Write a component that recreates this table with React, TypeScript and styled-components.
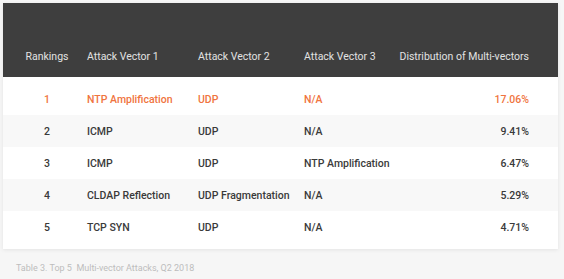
import React from 'react';
import styled, { createGlobalStyle } from 'styled-components';

const GlobalStyle = createGlobalStyle`
  body {
    margin: 0;
    background: #f6f6f6;
    font-family: Roboto, "Liberation Sans", sans-serif;
  }
`;

const Page = styled.div`
  width: 564px;
  height: 279px;
  padding: 3px 6px 0 3px;
  box-sizing: border-box;
`;

const Card = styled.div`
  background: #ffffff;
  box-shadow: 0 1px 4px rgba(0, 0, 0, 0.08);
`;

const COLS = '84px 111px 106px 95px 1fr';

const HeadRow = styled.div`
  display: grid;
  grid-template-columns: ${COLS};
  align-items: end;
  height: 74px;
  padding: 0 29px 13px 0;
  box-sizing: border-box;
  background: #3e3e3e;
  color: #e2e2e2;
  font-size: 10.5px;
  line-height: 14px;
`;

const Body = styled.div`
  padding: 6px 0;
`;

const Row = styled.div<{ shaded: boolean; highlight: boolean }>`
  display: grid;
  grid-template-columns: ${COLS};
  align-items: center;
  height: 32px;
  padding-right: 29px;
  background: ${({ shaded }) => (shaded ? '#f8f8f8' : '#ffffff')};
  color: ${({ highlight }) => (highlight ? '#f07440' : '#3a3a3a')};
  font-size: 10.5px;
  font-weight: 500;
`;

const Cell = styled.div<{ align?: 'left' | 'center' | 'right' }>`
  text-align: ${({ align }) => align || 'left'};
  padding-left: ${({ align }) => (align === 'center' ? '4px' : '0')};
  white-space: nowrap;
`;

const Caption = styled.div`
  margin: 14px 0 0 13px;
  font-size: 9px;
  color: #bdbdbd;
  white-space: pre;
`;

const rows = [
  ['1', 'NTP Amplification', 'UDP', 'N/A', '17.06%'],
  ['2', 'ICMP', 'UDP', 'N/A', '9.41%'],
  ['3', 'ICMP', 'UDP', 'NTP Amplification', '6.47%'],
  ['4', 'CLDAP Reflection', 'UDP Fragmentation', 'N/A', '5.29%'],
  ['5', 'TCP SYN', 'UDP', 'N/A', '4.71%'],
];

const App = () => {
  return (
    <Page>
      <GlobalStyle />
      <Card>
        <HeadRow>
          <Cell align="center">Rankings</Cell>
          <Cell>Attack Vector 1</Cell>
          <Cell>Attack Vector 2</Cell>
          <Cell>Attack Vector 3</Cell>
          <Cell align="right">Distribution of Multi-vectors</Cell>
        </HeadRow>
        <Body>
          {rows.map((r, i) => (
            <Row key={r[0]} shaded={i % 2 === 1} highlight={i === 0}>
              <Cell align="center">{r[0]}</Cell>
              <Cell>{r[1]}</Cell>
              <Cell>{r[2]}</Cell>
              <Cell>{r[3]}</Cell>
              <Cell align="right">{r[4]}</Cell>
            </Row>
          ))}
        </Body>
      </Card>
      <Caption>{'Table 3. Top 5  Multi-vector Attacks, Q2 2018'}</Caption>
    </Page>
  );
};

export default App;
